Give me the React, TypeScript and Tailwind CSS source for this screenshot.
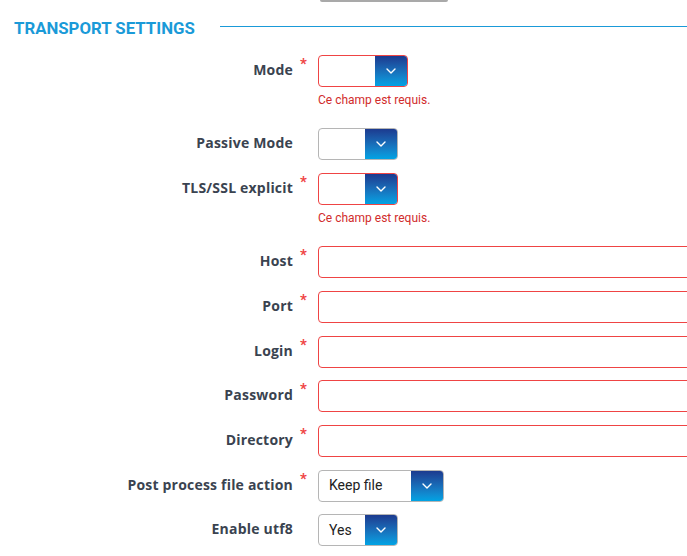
import { ReactNode } from "react";

type RowProps = {
  label: string;
  required?: boolean;
  error?: boolean;
  children: ReactNode;
};

function Chevron() {
  return (
    <svg width="10" height="6" viewBox="0 0 10 6" fill="none">
      <path d="M1 1L5 5L9 1" stroke="white" strokeWidth="1.4" strokeLinecap="round" strokeLinejoin="round" />
    </svg>
  );
}

function Select({
  width,
  value,
  invalid,
}: {
  width: string;
  value?: string;
  invalid?: boolean;
}) {
  return (
    <div
      className={`flex h-[32px] ${width} overflow-hidden rounded-[4px] border bg-white ${
        invalid ? "border-[#ef4444]" : "border-[#b5b5b5]"
      }`}
    >
      <div className="flex flex-1 items-center pl-[10px] text-[14px] text-[#222] [font-family:Roboto,sans-serif]">
        {value}
      </div>
      <div className="flex w-[32px] items-center justify-center bg-gradient-to-b from-[#1c3a8f] to-[#00a3e4]">
        <Chevron />
      </div>
    </div>
  );
}

function TextInput() {
  return <div className="h-[32px] w-[420px] shrink-0 rounded-[4px] border border-[#ef4444] bg-white" />;
}

function Row({ label, required, error, children }: RowProps) {
  return (
    <div className="mb-[12.7px] flex items-start gap-2">
      <div className="flex h-[32px] w-[310px] shrink-0 items-center justify-end pb-[3px]">
        <span className="text-[14px] font-bold tracking-[0.2px] text-[#3a4350] [font-family:'Open_Sans',sans-serif]">
          {label}
        </span>
        <span className="mb-[10px] w-[17px] pl-[7px] text-[15px] font-bold leading-none text-[#ef4444] [font-family:Roboto,sans-serif]">
          {required ? "*" : ""}
        </span>
      </div>
      <div className="flex flex-col">
        {children}
        {error && (
          <div className="mb-[7.6px] mt-[5px] text-[12px] leading-4 text-[#d12c2c] [font-family:Roboto,sans-serif]">
            Ce champ est requis.
          </div>
        )}
      </div>
    </div>
  );
}

export default function App() {
  return (
    <div className="h-[556px] w-full overflow-hidden bg-white">
      <div className="ml-[320px] h-[2px] w-[128px] rounded-b-sm bg-[#a9a9a9]" />
      <div className="mt-[14px] flex h-[24px] items-center pl-[14px]">
        <h2 className="text-[16.8px] font-bold uppercase leading-6 text-[#1a9ad8] [font-family:Roboto,sans-serif]">
          Transport settings
        </h2>
        <div className="mb-[3px] ml-[25px] h-px flex-1 bg-[#1a9ad8]" />
      </div>

      <div className="mt-[15px]">
        <Row label="Mode" required error>
          <Select width="w-[90px]" invalid />
        </Row>
        <Row label="Passive Mode">
          <Select width="w-[80px]" />
        </Row>
        <Row label="TLS/SSL explicit" required error>
          <Select width="w-[80px]" invalid />
        </Row>
        <Row label="Host" required>
          <TextInput />
        </Row>
        <Row label="Port" required>
          <TextInput />
        </Row>
        <Row label="Login" required>
          <TextInput />
        </Row>
        <Row label="Password" required>
          <TextInput />
        </Row>
        <Row label="Directory" required>
          <TextInput />
        </Row>
        <Row label="Post process file action" required>
          <Select width="w-[126px]" value="Keep file" />
        </Row>
        <Row label="Enable utf8">
          <Select width="w-[80px]" value="Yes" />
        </Row>
      </div>
    </div>
  );
}
